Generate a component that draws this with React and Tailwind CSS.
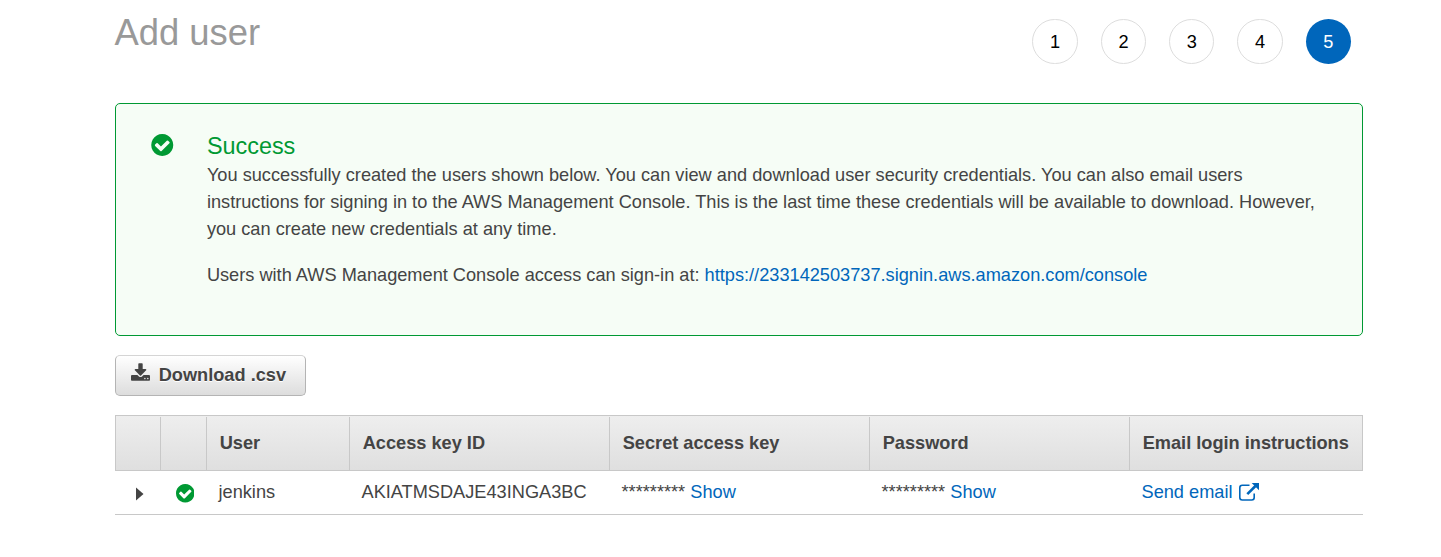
const CHECK =
  "M1284 606q0-28-18-46l-91-90q-19-19-45-19t-45 19l-408 407-226-226q-19-19-45-19t-45 19l-91 90q-18 18-18 46 0 27 18 45l362 362q19 19 45 19 27 0 46-19l543-543q18-18 18-45zm252 162q0 209-103 385.5t-279.5 279.5-385.5 103-385.5-103-279.5-279.5-103-385.5 103-385.5 279.5-279.5 385.5-103 385.5 103 279.5 279.5 103 385.5z";

const DOWNLOAD =
  "M1280 1344q0-26-19-45t-45-19-45 19-19 45 19 45 45 19 45-19 19-45zm256 0q0-26-19-45t-45-19-45 19-19 45 19 45 45 19 45-19 19-45zm128-224v320q0 40-28 68t-68 28h-1472q-40 0-68-28t-28-68v-320q0-40 28-68t68-28h465l135 136q58 56 136 56t136-56l136-136h464q40 0 68 28t28 68zm-325-569q17 41-14 70l-448 448q-18 19-45 19t-45-19l-448-448q-31-29-14-70 17-39 59-39h256v-448q0-26 19-45t45-19h256q26 0 45 19t19 45v448h256q42 0 59 39z";

function CheckIcon({ className }) {
  return (
    <svg viewBox="0 0 1536 1536" className={className} fill="#009933">
      <path d={CHECK} />
    </svg>
  );
}

function ExternalIcon() {
  return (
    <svg viewBox="0 0 20 18" className="ml-[6.3px] mb-px h-[18px] w-5" fill="none" stroke="#0066bb">
      <path d="M10.5 2.2H3.3Q.8 2.2.8 4.7v9.8Q.8 17 3.3 17h9.4q2.5 0 2.5-2.5V10.5" strokeWidth="1.6" />
      <path d="M8.3 11.2 16.5 3" strokeWidth="2.6" />
      <path d="M12.7 0H20v7.3Z" fill="#0066bb" stroke="none" />
    </svg>
  );
}

const HEADERS = ["User", "Access key ID", "Secret access key", "Password", "Email login instructions"];
const COLUMNS = "grid grid-cols-[44px_46px_143px_260px_260px_260px_1fr]";

function Steps() {
  return (
    <ol className="mr-3 mt-[19px] flex gap-[22.9px]">
      {[1, 2, 3, 4, 5].map((n) => (
        <li
          key={n}
          className={
            n === 5
              ? "flex h-[45px] w-[45.4px] items-center justify-center rounded-full bg-[#0066bb] pt-px text-white"
              : "flex h-[45px] w-[45.4px] items-center justify-center rounded-full border border-[#dddddd] pt-px text-black"
          }
        >
          {n}
        </li>
      ))}
    </ol>
  );
}

function Masked() {
  return (
    <div className="pl-[12.5px]">
      ********* <a className="text-[#0066bb]">Show</a>
    </div>
  );
}

export default function App() {
  return (
    <main className="h-[557px] w-[1441px] bg-white pl-[115px] pr-[78px] font-['Liberation_Sans',Arial,sans-serif] text-[18.2px] leading-[27px] text-[#444444]">
      <header className="flex h-[103px] items-start justify-between">
        <h1 className="-ml-[0.5px] mt-[11px] text-[36.4px] leading-[44px] text-[#999999]">Add user</h1>
        <Steps />
      </header>

      <section className="flex h-[233px] rounded-[5px] border border-[#009933] bg-[#f6fdf6] pl-[35.4px] pt-[28px]">
        <CheckIcon className="mt-[2px] h-[22px] w-[22.5px] shrink-0" />
        <div className="ml-[33px] w-[1120px]">
          <h2 className="text-[23.4px] leading-[29px] text-[#009933]">Success</h2>
          <p className="mt-px">
            You successfully created the users shown below. You can view and download user security credentials. You can
            also email users instructions for signing in to the AWS Management Console. This is the last time these
            credentials will be available to download. However, you can create new credentials at any time.
          </p>
          <p className="mt-[19px]">
            Users with AWS Management Console access can sign-in at:{" "}
            <a className="text-[#0066bb]">https://233142503737.signin.aws.amazon.com/console</a>
          </p>
        </div>
      </section>

      <button className="mt-[19px] flex h-[41px] w-[191px] items-center rounded-[5px] border border-[#b4b4b4] border-t-[#d5d5d5] bg-linear-to-b from-white to-[#dddddd] pl-[15px] font-bold [text-shadow:0_1px_0_#ffffff]">
        <svg viewBox="0 0 1664 1536" className="mb-[7px] mr-[8.7px] h-[18px] w-[19px]" fill="#444444">
          <path d={DOWNLOAD} />
        </svg>
        Download .csv
      </button>

      <div className="mt-[19px]">
        <div className={`${COLUMNS} h-[56px] border border-[#c8c8c8] bg-linear-to-b from-[#eeeeee] to-[#dfdfdf] pt-px font-bold`}>
          <div />
          <div className="border-l border-[#c8c8c8]" />
          {HEADERS.map((title) => (
            <div key={title} className="flex items-center whitespace-nowrap border-l border-[#c8c8c8] pl-[12.7px]">
              {title}
            </div>
          ))}
        </div>
        <div className={`${COLUMNS} h-[44px] items-center border-b border-[#c8c8c8] pl-px`}>
          <svg viewBox="0 0 8 14" className="ml-[20px] mt-[2px] h-[14px] w-[8px]" fill="#444444">
            <path d="M0 0.5 7.5 7 0 13.5Z" />
          </svg>
          <CheckIcon className="ml-[15.5px] mt-[2px] h-[18.5px] w-[18.5px]" />
          <div className="pl-[12.5px]">jenkins</div>
          <div className="pl-[12.5px]">AKIATMSDAJE43INGA3BC</div>
          <Masked />
          <Masked />
          <div className="flex items-center pl-[12.5px] text-[#0066bb]">
            Send email
            <ExternalIcon />
          </div>
        </div>
      </div>
    </main>
  );
}
